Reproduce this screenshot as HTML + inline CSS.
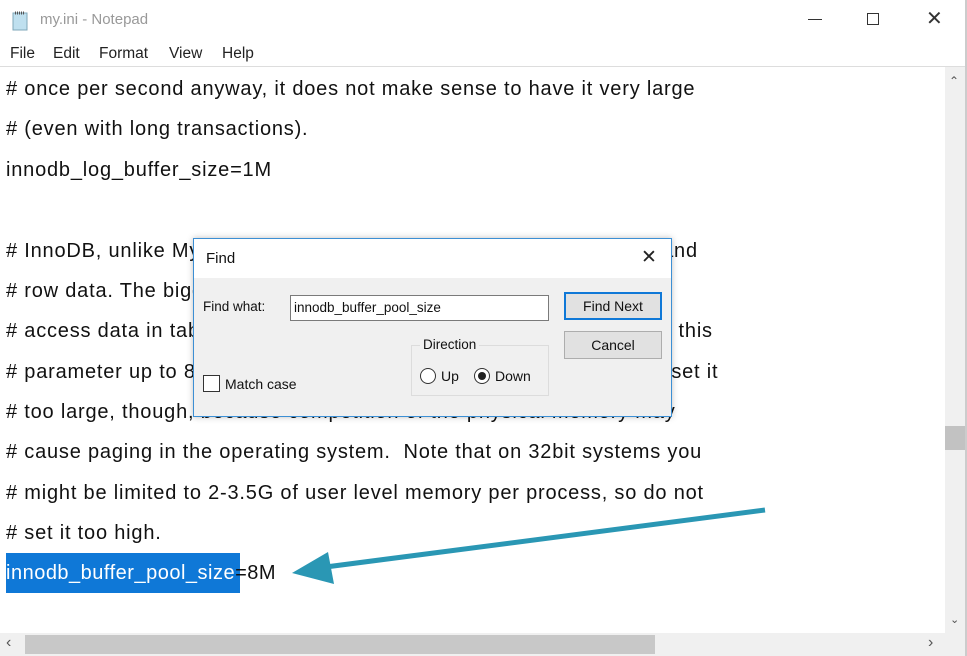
<!DOCTYPE html>
<html><head><meta charset="utf-8"><style>
*{margin:0;padding:0;box-sizing:border-box}
body{width:967px;height:656px;overflow:hidden;background:#fff;font-family:"Liberation Sans",Arial,sans-serif;position:relative}
.a{position:absolute}
.ln{position:absolute;left:6px;font-size:20px;color:#111;white-space:pre;line-height:22px;letter-spacing:0.8px}
.ui{font-size:15.5px;color:#222}
</style></head><body>
<div class="a" style="left:0;top:0;width:967px;height:40px;background:#fff"></div>
<svg class="a" style="left:10px;top:10px" width="20" height="22"><rect x="3" y="3" width="14" height="17" fill="#bfe0ef" stroke="#7fa7b8"/><line x1="5" y1="3" x2="15" y2="3" stroke="#555" stroke-dasharray="1 1" stroke-width="3"/></svg>
<div class="a" style="left:40px;top:11px;font-size:15px;color:#999">my.ini - Notepad</div>
<div class="a" style="left:808px;top:19px;width:14px;height:1px;background:#333"></div>
<div class="a" style="left:867px;top:13px;width:12px;height:12px;border:1px solid #333"></div>
<div class="a" style="left:926px;top:6px;font-size:20px;color:#333">✕</div>
<div class="a ui" style="left:10px;top:45px">File</div>
<div class="a ui" style="left:53px;top:45px">Edit</div>
<div class="a ui" style="left:99px;top:45px">Format</div>
<div class="a ui" style="left:169px;top:45px">View</div>
<div class="a ui" style="left:222px;top:45px">Help</div>
<div class="a" style="left:0;top:66px;width:967px;height:1px;background:#ddd"></div>
<div class="ln" style="top:78px"># once per second anyway, it does not make sense to have it very large</div>
<div class="ln" style="top:118px"># (even with long transactions).</div>
<div class="ln" style="top:159px">innodb_log_buffer_size=1M</div>
<div class="ln" style="top:240px"># InnoDB, unlike MyISAM, uses a buffer pool to cache both indexes and</div>
<div class="ln" style="top:280px"># row data. The bigger you set this the less disk I/O is needed to</div>
<div class="ln" style="top:320px"># access data in tables. On a dedicated database server you may set this</div>
<div class="ln" style="top:361px"># parameter up to 80% of the machine physical memory size. Do not set it</div>
<div class="ln" style="top:401px"># too large, though, because competition of the physical memory may</div>
<div class="ln" style="top:441px"># cause paging in the operating system.  Note that on 32bit systems you</div>
<div class="ln" style="top:482px"># might be limited to 2-3.5G of user level memory per process, so do not</div>
<div class="ln" style="top:522px"># set it too high.</div>
<div class="a" style="left:6px;top:553px;width:234px;height:40px;background:#0f78d7"></div>
<div class="ln" style="top:562px;letter-spacing:0.5px"><span style="color:#fff">innodb_buffer_pool_size</span>=8M</div>
<div class="a" style="left:945px;top:67px;width:20px;height:566px;background:#f0f0f0"></div>
<div class="a" style="left:945px;top:426px;width:20px;height:24px;background:#c2c2c2"></div>
<div class="a" style="left:949px;top:74px;font-size:12px;color:#555">⌃</div>
<div class="a" style="left:950px;top:612px;font-size:11px;color:#555;transform:rotate(180deg)">⌃</div>
<div class="a" style="left:0;top:633px;width:967px;height:23px;background:#f0f0f0"></div>
<div class="a" style="left:25px;top:635px;width:630px;height:19px;background:#c8c8c8"></div>
<div class="a" style="left:6px;top:634px;font-size:16px;color:#555">‹</div>
<div class="a" style="left:928px;top:634px;font-size:16px;color:#555">›</div>
<div class="a" style="left:965px;top:0;width:2px;height:656px;background:#ccc"></div>
<div class="a" style="left:193px;top:238px;width:479px;height:179px;background:#f0f0f0;border:1px solid #3c8fd4;box-shadow:0 0 6px rgba(0,0,0,.25)"></div>
<div class="a" style="left:194px;top:239px;width:477px;height:39px;background:#fff"></div>
<div class="a" style="left:206px;top:250px;font-size:15px;color:#111">Find</div>
<div class="a" style="left:641px;top:246px;font-size:19px;color:#222">✕</div>
<div class="a" style="left:203px;top:299px;font-size:13.5px;color:#111">Find what:</div>
<div class="a" style="left:290px;top:295px;width:259px;height:26px;background:#fff;border:1px solid #7a7a7a;font-size:13.5px;padding:4px 3px;color:#111">innodb_buffer_pool_size</div>
<div class="a" style="left:564px;top:292px;width:98px;height:28px;background:#e1e1e1;border:2px solid #0f78d7;font-size:14px;text-align:center;line-height:24px;color:#111">Find Next</div>
<div class="a" style="left:564px;top:331px;width:98px;height:28px;background:#e1e1e1;border:1px solid #adadad;font-size:14px;text-align:center;line-height:26px;color:#111">Cancel</div>
<div class="a" style="left:411px;top:345px;width:138px;height:51px;border:1px solid #dcdcdc"></div>
<div class="a" style="left:420px;top:337px;background:#f0f0f0;padding:0 3px;font-size:13.5px;color:#111">Direction</div>
<div class="a" style="left:420px;top:368px;width:16px;height:16px;border-radius:50%;background:#fff;border:1px solid #333"></div>
<div class="a" style="left:441px;top:368px;font-size:14px;color:#111">Up</div>
<div class="a" style="left:474px;top:368px;width:16px;height:16px;border-radius:50%;background:#fff;border:1px solid #333"></div>
<div class="a" style="left:478px;top:372px;width:8px;height:8px;border-radius:50%;background:#222"></div>
<div class="a" style="left:495px;top:368px;font-size:14px;color:#111">Down</div>
<div class="a" style="left:203px;top:375px;width:17px;height:17px;background:#fff;border:1px solid #333"></div>
<div class="a" style="left:225px;top:376px;font-size:14px;color:#111">Match case</div>
<svg class="a" style="left:0;top:0" width="967" height="656"><line x1="765" y1="510" x2="318" y2="568" stroke="#2a97b4" stroke-width="5"/><polygon points="292,573 328,552 334,584" fill="#2a97b4"/></svg>
</body></html>
